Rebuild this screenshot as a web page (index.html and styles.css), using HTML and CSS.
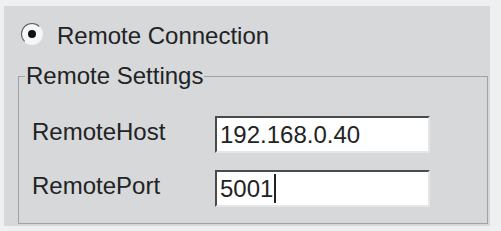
FILE: index.html
```html
<!DOCTYPE html>
<html lang="en">
<head>
    <meta charset="UTF-8">
    <title>Remote Connection</title>
    <link rel="stylesheet" href="styles.css">
</head>
<body>
    <div class="panel">
        <div class="radio-row">
            <span class="radio"><span class="dot"></span></span>
            <span class="radio-label">Remote Connection</span>
        </div>
        <fieldset class="group">
            <legend>Remote Settings</legend>
            <div class="form-grid">
                <span class="field-label">RemoteHost</span>
                <div class="textbox">192.168.0.40</div>
                <span class="field-label">RemotePort</span>
                <div class="textbox">5001<span class="caret"></span></div>
            </div>
        </fieldset>
    </div>
</body>
</html>
```

FILE: styles.css
```css
body {
    margin: 0;
    background-color: #eef0f1;
    font-family: "Liberation Sans", Arial, sans-serif;
    font-size: 24px;
    color: #222324;
}
.panel {
    width: 470px;
    height: 204px;
    margin: 6px 0 0 4px;
    padding: 16px 2px 0 14px;
    background-color: #d6d8da;
}
.radio-row {
    display: flex;
    align-items: flex-start;
    height: 28px;
    line-height: 28px;
}
.radio {
    width: 20px;
    height: 20px;
    margin: 1px 0 0 3px;
    border-radius: 50%;
    border: 1px solid;
    border-color: #5a5c5e #f2f3f4 #f2f3f4 #5a5c5e;
    background: #f6f6f6;
    display: flex;
    align-items: center;
    justify-content: center;
}
.dot {
    width: 8px;
    height: 8px;
    border-radius: 50%;
    background: #111;
}
.radio-label {
    margin-left: 14px;
}
.group {
    box-sizing: border-box;
    margin: 12px 0 0 0;
    padding: 26px 0 0 13px;
    height: 162px;
    border: 1px solid #9fa2a5;
}
.group legend {
    margin-left: -7px;
    padding: 0 1px;
    line-height: 28px;
}
.form-grid {
    display: grid;
    grid-template-columns: 183px 215px;
    grid-template-rows: 37px 37px;
    row-gap: 17px;
}
.field-label {
    line-height: 28px;
    margin-top: 2px;
}
.textbox {
    box-sizing: border-box;
    height: 37px;
    padding: 0 3px;
    line-height: 33px;
    background: #fff;
    border: 2px solid;
    border-color: #4a4b4c #e4e6e8 #e4e6e8 #4a4b4c;
    color: #222324;
}
.caret {
    display: inline-block;
    width: 2px;
    height: 29px;
    margin-left: 1px;
    vertical-align: -6px;
    background: #222;
}
```
